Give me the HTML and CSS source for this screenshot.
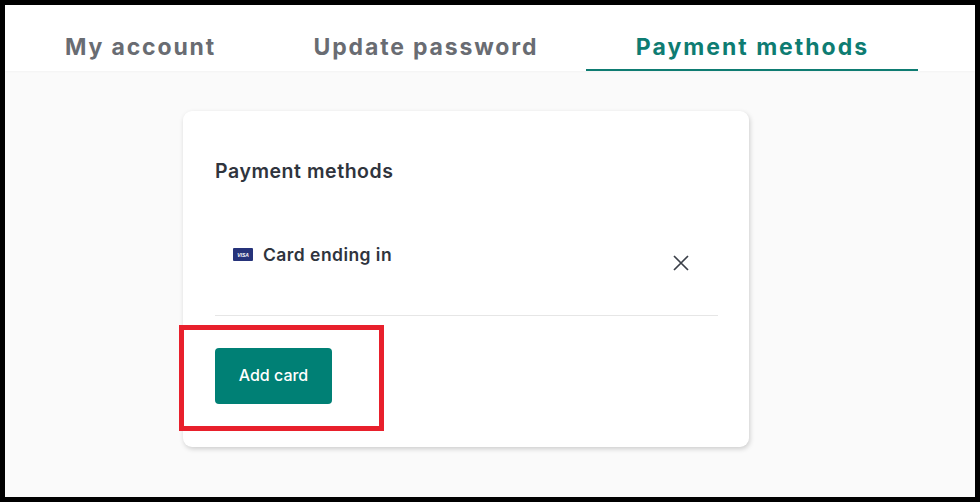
FILE: index.html
```html
<!DOCTYPE html>
<html lang="en">
<head>
<meta charset="utf-8">
<title>Payment methods</title>
<link rel="stylesheet" href="styles.css">
</head>
<body>
<div class="frame">
  <nav class="tabs">
    <a class="tab">My account</a>
    <a class="tab">Update password</a>
    <a class="tab active">Payment methods</a>
  </nav>
  <main class="content">
    <section class="card">
      <h2 class="title">Payment methods</h2>
      <div class="method">
        <div class="method-info">
          <svg class="visa" viewBox="0 0 20 13" width="20" height="13" aria-hidden="true">
            <rect width="20" height="13" rx="1" fill="#26337a"/>
            <text x="10" y="8.6" text-anchor="middle" class="visa-text">VISA</text>
          </svg>
          <span class="method-label">Card ending in</span>
        </div>
        <svg class="remove" viewBox="0 0 18 18" width="18" height="18" aria-hidden="true">
          <path d="M2 2 L16 16 M16 2 L2 16" stroke="#3a3f48" stroke-width="1.7" fill="none"/>
        </svg>
      </div>
      <div class="actions">
        <button class="add-card">Add card</button>
        <div class="highlight"></div>
      </div>
    </section>
  </main>
</div>
</body>
</html>
```
FILE: styles.css
```css
* { box-sizing: border-box; }
html, body { margin: 0; height: 100%; }
body { background: #000; font-family: "Inter", "Liberation Sans", sans-serif; overflow: hidden; }
.frame {
  width: 980px; height: 502px;
  border: 5px solid #000;
  background: #fafafa;
  display: flex; flex-direction: column;
}
.tabs {
  height: 66px; background: #fff; flex: none;
  display: flex; align-items: stretch; padding-left: 10px;
  box-shadow: 0 1px 2px rgba(0,0,0,.03);
}
.tab {
  padding: 0 47.5px 8px 50px; display: flex; align-items: flex-end;
  font-size: 23px; line-height: 28px; font-weight: 700; letter-spacing: 1.85px; color: #696c72; white-space: nowrap;
  border-bottom: 2px solid transparent;
}
.tab.active { color: #0e7c72; border-bottom-color: #0e7c72; letter-spacing: 2px; padding-right: 48.5px; }
.content { flex: 1; padding: 40px 0 0 178px; }
.card {
  width: 566px; height: 336px; background: #fff; border-radius: 9px;
  box-shadow: 1px 2px 5px rgba(0,0,0,.18);
  padding: 48px 31px 0 32px;
}
.title { margin: 0; font-size: 19.5px; line-height: 24px; font-weight: 600; letter-spacing: .55px; color: #2f343d; }
.method {
  height: 133px; border-bottom: 1px solid #e6e6e6;
  display: flex; justify-content: space-between; align-items: flex-start;
  padding: 59px 28px 0 18px;
}
.method-info { display: flex; align-items: center; gap: 10px; height: 24px; }
.visa { display: block; }
.visa-text { font-family: "Liberation Sans", sans-serif; font-size: 5px; font-weight: 700; font-style: italic; fill: #fff; }
.method-label { font-size: 17.5px; font-weight: 600; letter-spacing: .45px; color: #2f343d; }
.remove { margin-top: 12px; }
.actions { position: relative; padding-top: 32px; }
.add-card {
  width: 117px; height: 56px; padding: 0 0 2px; background: #008075; color: #fff; border: 0; border-radius: 4px;
  font-family: inherit; font-size: 16px; font-weight: 500; display: block;
}
.highlight {
  position: absolute; left: -36px; top: 9px; width: 205px; height: 106px;
  border: 5px solid #e8202c;
}
```
